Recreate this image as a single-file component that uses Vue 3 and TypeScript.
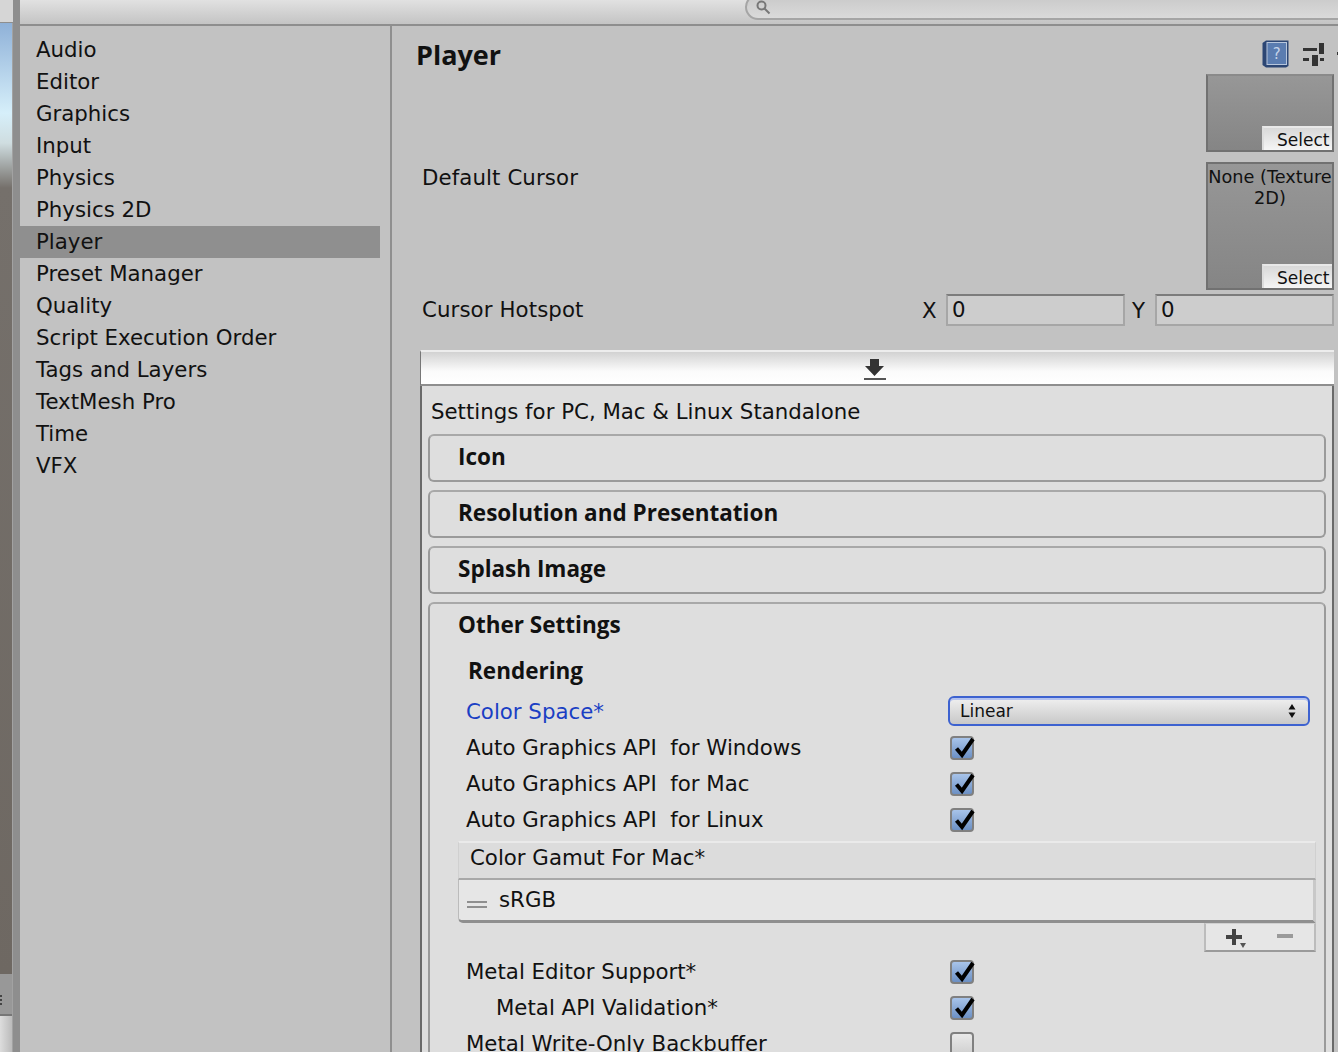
<script setup lang="ts">
const categories = [
  'Audio', 'Editor', 'Graphics', 'Input', 'Physics', 'Physics 2D', 'Player',
  'Preset Manager', 'Quality', 'Script Execution Order', 'Tags and Layers',
  'TextMesh Pro', 'Time', 'VFX',
]
const selected = 'Player'
const foldouts = ['Icon', 'Resolution and Presentation', 'Splash Image']
const apiRows = [
  'Auto Graphics API  for Windows',
  'Auto Graphics API  for Mac',
  'Auto Graphics API  for Linux',
]
</script>

<template>
  <div class="page">
    <!-- scene view peeking out on the left -->
    <div class="strip">
      <div class="strip-top"></div>
      <div class="strip-scene"></div>
      <div class="strip-handle"><span class="dots"></span></div>
      <div class="strip-box"></div>
    </div>

    <div class="window">
      <div class="toolbar">
        <div class="search">
          <svg class="search-icon" width="18" height="18" viewBox="0 0 18 18">
            <circle cx="6.5" cy="6.5" r="4" fill="none" stroke="#777" stroke-width="2" />
            <path d="M9.5 9.5 L14.5 14.5" stroke="#777" stroke-width="2" />
          </svg>
        </div>
      </div>

      <div class="body">
        <ul class="sidebar">
          <li v-for="c in categories" :key="c" class="cat" :class="{ active: c === selected }">{{ c }}</li>
        </ul>

        <div class="inspector">
          <div class="title-row">
            <h1 class="title">Player</h1>
            <div class="title-icons">
              <svg width="27" height="28" viewBox="0 0 27 28">
                <path d="M0.5 3 L4 0.5 H26.5 V26 L24 27.5 H4 L0.5 25 Z" fill="#2c4674" />
                <rect x="5" y="2.5" width="19.5" height="22" fill="#5a7cb0" stroke="#b7c6dc" />
                <text x="14.8" y="19" class="help-q">?</text>
              </svg>
              <svg width="22" height="24" viewBox="0 0 22 24">
                <g fill="#333">
                  <rect x="0" y="5" width="14" height="3" />
                  <rect x="16" y="0" width="5" height="11" />
                  <rect x="0" y="15" width="6" height="3" />
                  <rect x="9" y="12" width="6" height="11" />
                  <rect x="17" y="15" width="4" height="3" />
                </g>
              </svg>
              <span class="title-dash"></span>
            </div>
          </div>

          <div class="tex-row first">
            <div class="tex-box short">
              <span class="select-btn">Select</span>
            </div>
          </div>

          <div class="tex-row cursor">
            <label class="field-label">Default Cursor</label>
            <div class="tex-box tall">
              <span class="tex-name">None (Texture 2D)</span>
              <span class="select-btn">Select</span>
            </div>
          </div>

          <div class="hotspot">
            <label class="field-label">Cursor Hotspot</label>
            <div class="hotspot-fields">
              <span class="axis">X</span>
              <span class="num">0</span>
              <span class="axis y">Y</span>
              <span class="num">0</span>
            </div>
          </div>

          <div class="platform">
            <div class="platform-tab">
              <svg width="24" height="24" viewBox="0 0 24 24">
                <path d="M7 1 H16 V8 H21 L11.5 18 L2 8 H7 Z" fill="#333" />
                <rect x="1" y="20" width="22" height="2" fill="#555" />
              </svg>
            </div>
            <div class="platform-body">
              <div class="platform-title">Settings for PC, Mac &amp; Linux Standalone</div>

              <div v-for="f in foldouts" :key="f" class="foldout">{{ f }}</div>

              <div class="foldout open">
                <div class="foldout-head">Other Settings</div>
                <div class="section">Rendering</div>

                <div class="row">
                  <span class="row-label blue">Color Space*</span>
                  <div class="dropdown">
                    <span>Linear</span>
                    <svg width="8" height="16" viewBox="0 0 8 16">
                      <path d="M4 1 L7.5 6.5 H.5 Z M4 15 L.5 9.5 H7.5 Z" fill="#111" />
                    </svg>
                  </div>
                </div>

                <div v-for="r in apiRows" :key="r" class="row">
                  <span class="row-label">{{ r }}</span>
                  <span class="check on">
                    <svg width="27" height="27" viewBox="0 0 27 27">
                      <path d="M5.5 13.5 L11 20 L22 4" fill="none" stroke="#000" stroke-width="4" />
                    </svg>
                  </span>
                </div>

                <div class="list">
                  <div class="list-head">Color Gamut For Mac*</div>
                  <div class="list-item">
                    <span class="grip"></span>
                    <span>sRGB</span>
                  </div>
                  <div class="list-foot">
                    <svg width="22" height="22" viewBox="0 0 22 22">
                      <path d="M7 1 H11 V7 H17 V11 H11 V17 H7 V11 H1 V7 H7 Z" fill="#444" />
                      <path d="M15 15 H21 L18 20 Z" fill="#555" />
                    </svg>
                    <span class="minus"></span>
                  </div>
                </div>

                <div class="row">
                  <span class="row-label">Metal Editor Support*</span>
                  <span class="check on">
                    <svg width="27" height="27" viewBox="0 0 27 27">
                      <path d="M5.5 13.5 L11 20 L22 4" fill="none" stroke="#000" stroke-width="4" />
                    </svg>
                  </span>
                </div>
                <div class="row">
                  <span class="row-label indent">Metal API Validation*</span>
                  <span class="check on">
                    <svg width="27" height="27" viewBox="0 0 27 27">
                      <path d="M5.5 13.5 L11 20 L22 4" fill="none" stroke="#000" stroke-width="4" />
                    </svg>
                  </span>
                </div>
                <div class="row">
                  <span class="row-label">Metal Write-Only Backbuffer</span>
                  <span class="check"></span>
                </div>
              </div>
            </div>
          </div>
        </div>
      </div>
    </div>
  </div>
</template>

<style>
html, body {
  margin: 0;
  overflow: hidden;
  background: #c2c2c2;
}
</style>

<style scoped>
.page {
  width: 1338px;
  height: 1052px;
  display: flex;
  overflow: hidden;
  font-family: "DejaVu Sans", "Liberation Sans", sans-serif;
  font-size: 21.3px;
  color: #111;
  background: #c2c2c2;
}

/* left strip */
.strip {
  width: 13px;
  flex: none;
  display: flex;
  flex-direction: column;
  background: #989898;
  border-right: 7px solid #8e8e8e;
  box-shadow: inset -1px 0 0 #a2a2a2;
}
.strip-top {
  height: 22px;
  background: #d6d6d6;
  border-bottom: 1px solid #8e8e8e;
}
.strip-scene {
  height: 951px;
  width: 12px;
  background: linear-gradient(#8fb1d8 0, #d6effa 90px, #cfdde0 120px, #75706b 165px, #6e6862 100%);
}
.strip-handle {
  height: 40px;
  padding-top: 21px;
  box-sizing: border-box;
}
.dots {
  display: block;
  width: 2px;
  height: 10px;
  background: repeating-linear-gradient(#444 0 2px, transparent 2px 4px);
}
.strip-box {
  height: 38px;
  width: 12px;
  background: linear-gradient(90deg, #ddd, #bbb);
  border-top: 2px solid #777;
  box-sizing: border-box;
}

/* toolbar */
.window {
  flex: 1;
  min-width: 0;
  display: flex;
  flex-direction: column;
}
.toolbar {
  height: 24px;
  flex: none;
  position: relative;
  background: linear-gradient(#e1e1e1, #c4c4c4);
  border-bottom: 2px solid #8e8e8e;
}
.search {
  position: absolute;
  left: 725px;
  top: -6px;
  width: 640px;
  height: 26px;
  border: 2px solid #a5a5a5;
  border-radius: 14px;
  background: linear-gradient(#c9c9c9, #dadada);
  box-sizing: border-box;
}
.search-icon {
  position: absolute;
  left: 8px;
  top: 3px;
}

.body {
  flex: 1;
  min-height: 0;
  display: flex;
}

/* category list */
.sidebar {
  list-style: none;
  margin: 0;
  padding: 8px 0 0;
  width: 370px;
  flex: none;
  border-right: 2px solid #8f8f8f;
  box-sizing: content-box;
}
.cat {
  height: 32px;
  line-height: 31px;
  width: 360px;
  padding-left: 16px;
  box-sizing: border-box;
}
.cat.active {
  background: #8f8f8f;
}

/* inspector */
.inspector {
  flex: 1;
  min-width: 0;
  padding-right: 4px;
}
.title-row {
  height: 48px;
  display: flex;
  justify-content: space-between;
  align-items: flex-start;
  padding-left: 24px;
}
.title {
  margin: 0;
  padding-top: 11px;
  font-family: "Open Sans", "DejaVu Sans", sans-serif;
  font-size: 27px;
  line-height: 36px;
  font-weight: 700;
}
.title-icons {
  display: flex;
  align-items: flex-start;
  gap: 14px;
  padding-top: 14px;
  margin-right: -4px;
}
.title-icons svg:nth-child(2) {
  margin-top: 3px;
}
.help-q {
  font-family: "DejaVu Sans", sans-serif;
  font-size: 15px;
  fill: #c5d3e8;
  text-anchor: middle;
}
.title-dash {
  width: 1px;
  height: 3px;
  margin-top: 12px;
  margin-left: -2px;
  background: #333;
}

.tex-row {
  display: flex;
  justify-content: space-between;
  align-items: flex-start;
}
.tex-row.first {
  justify-content: flex-end;
  height: 88px;
}
.tex-row.cursor {
  height: 132px;
}
.field-label {
  padding-left: 30px;
  line-height: 32px;
  letter-spacing: 0.1px;
}
.tex-box {
  position: relative;
  width: 128px;
  box-sizing: border-box;
  background: linear-gradient(#979797, #858585);
  border: 2px solid #717171;
  text-align: center;
  font-size: 17.7px;
  line-height: 21px;
}
.tex-box.short {
  height: 78px;
  border-top-color: #8a8a8a;
}
.tex-box.tall {
  height: 128px;
}
.tex-name {
  display: block;
  white-space: normal;
  margin: 3px -2px 0;
}
.select-btn {
  position: absolute;
  right: 0;
  bottom: 0;
  width: 70px;
  height: 24px;
  line-height: 25px;
  padding-left: 13px;
  box-sizing: border-box;
  text-align: left;
  background: linear-gradient(#d8d8d8, #f5f5f5);
  border-left: 2px solid #ddd;
  border-top: 2px solid #e8e8e8;
  font-size: 17px;
}

.hotspot {
  display: flex;
  justify-content: space-between;
  align-items: center;
  height: 34px;
  margin-top: -1px;
}
.hotspot-fields {
  display: flex;
  align-items: center;
  width: 412px;
}
.axis {
  width: 24px;
  flex: none;
}
.axis.y {
  width: 23px;
  padding-left: 7px;
  box-sizing: content-box;
}
.num {
  flex: 1;
  height: 32px;
  line-height: 28px;
  box-sizing: border-box;
  padding-left: 4px;
  background: #cdcdcd;
  border: 2px solid #a6a6a6;
  border-top-color: #7c7c7c;
}

/* platform panel */
.platform {
  margin-top: 23px;
  margin-left: 28px;
}
.platform-tab {
  height: 36px;
  box-sizing: border-box;
  background: linear-gradient(#d2d2d2, #fbfbfb 60%, #fff);
  border-top: 2px solid #ededed;
  border-bottom: 2px solid #8e8e8e;
  border-left: 1px solid #777;
  display: flex;
  justify-content: center;
  padding-top: 6px;
}
.platform-tab svg {
  margin-right: 5px;
}
.platform-body {
  background: #dedede;
  border-left: 2px solid #6a6a6a;
  border-right: 2px solid #6a6a6a;
  padding: 0 6px;
  height: 700px;
}
.platform-title {
  height: 48px;
  line-height: 51px;
  padding-left: 3px;
}
.foldout {
  height: 48px;
  box-sizing: border-box;
  margin-bottom: 8px;
  padding-left: 28px;
  font-family: "Open Sans", "DejaVu Sans", sans-serif;
  font-size: 22.5px;
  line-height: 42px;
  font-weight: 700;
  border: 2px solid #9a9a9a;
  border-radius: 6px;
  border-top-color: #a8a8a8;
}
.foldout.open {
  height: 600px;
  font-family: "DejaVu Sans", "Liberation Sans", sans-serif;
  font-size: 21.3px;
  font-weight: 400;
  padding: 0;
  border-bottom: none;
  border-radius: 6px 6px 0 0;
}
.foldout-head {
  height: 46px;
  padding-left: 28px;
  font-family: "Open Sans", "DejaVu Sans", sans-serif;
  font-size: 22.5px;
  line-height: 42px;
  font-weight: 700;
}
.section {
  height: 44px;
  padding-left: 38px;
  font-family: "Open Sans", "DejaVu Sans", sans-serif;
  font-size: 22.5px;
  line-height: 42px;
  font-weight: 700;
}
.row {
  height: 36px;
  display: flex;
  align-items: center;
  white-space: pre;
}
.row-label {
  width: 518px;
  flex: none;
  padding-left: 36px;
  box-sizing: border-box;
}
.row-label.blue {
  color: #1a3fc4;
}
.row-label.indent {
  padding-left: 66px;
}
.dropdown {
  width: 362px;
  height: 30px;
  margin-top: -2px;
  box-sizing: border-box;
  padding: 0 12px 0 10px;
  display: flex;
  justify-content: space-between;
  align-items: center;
  font-size: 17px;
  border: 2px solid #3d62d0;
  border-radius: 6px;
  background: linear-gradient(#f0f0f0, #c8c8c8);
  box-shadow: inset 0 2px 0 #b4c2ef;
}
.check {
  width: 24px;
  height: 24px;
  margin-left: 2px;
  box-sizing: border-box;
  border: 2px solid #808080;
  border-radius: 4px;
  background: linear-gradient(#e9e9e9, #d0d0d0);
  position: relative;
}
.check.on {
  background: linear-gradient(#a8c4ea, #6c90c4);
}
.check svg {
  position: absolute;
  left: -1px;
  top: -3px;
}

.list {
  margin: 3px 8px 0 28px;
  position: relative;
  height: 113px;
}
.list-head {
  height: 39px;
  box-sizing: border-box;
  padding-left: 11px;
  line-height: 29px;
  background: #dcdcdc;
  border: 1px solid #d0d0d0;
  border-top: 2px solid #eaeaea;
  border-bottom: 2px solid #a8a8a8;
}
.list-item {
  height: 43px;
  box-sizing: border-box;
  display: flex;
  align-items: center;
  gap: 12px;
  padding: 0 0 0 8px;
  background: #e6e6e6;
  border-bottom: 3px solid #8f8f8f;
  border-left: 1px solid #bbb;
  border-right: 3px solid #c8c8c8;
  border-radius: 0 0 0 5px;
}
.grip {
  width: 20px;
  height: 7px;
  margin-top: 8px;
  border-top: 2px solid #8f8f8f;
  border-bottom: 2px solid #8f8f8f;
  box-sizing: border-box;
}
.list-foot {
  margin-left: auto;
  width: 112px;
  height: 29px;
  box-sizing: border-box;
  display: flex;
  align-items: center;
  gap: 30px;
  padding-left: 19px;
  background: #e6e6e6;
  border: 2px solid #bcbcbc;
  border-top: 1px solid #d0d0d0;
  border-bottom-color: #9a9a9a;
}
.list-foot svg {
  margin-top: 4px;
}
.minus {
  width: 16px;
  height: 4px;
  margin-top: -3px;
  background: #9a9a9a;
}
</style>
